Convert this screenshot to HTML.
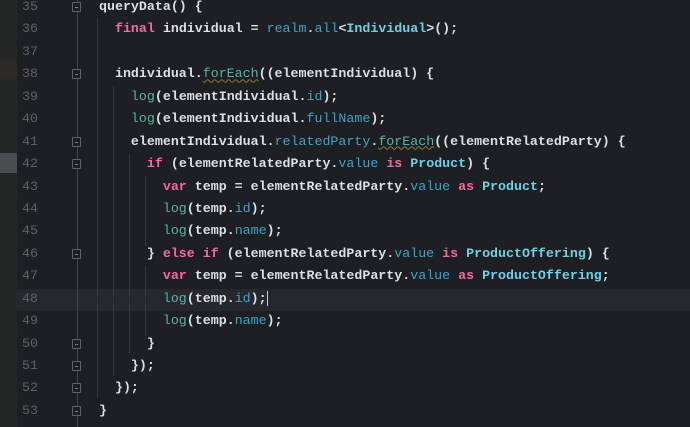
<html><head><style>
body{margin:0;width:690px;height:427px;overflow:hidden;background:#1e1f22;position:relative;font-family:"Liberation Mono",monospace;font-size:13.3px}
.strip{position:absolute;left:0;top:0;width:17px;height:427px;background:#242726}
.cur{position:absolute;left:17px;top:289px;width:673px;height:22px;background:#26282e}
.ln{position:absolute;left:17px;width:21px;text-align:right;color:#5f6168}
.code{position:absolute;left:99px;white-space:pre;color:#dcdfe4;font-weight:bold}
.k{color:#f36b9d}.m{color:#56b6a4;font-weight:normal}.f{color:#3fa3c9;font-weight:normal}.c{color:#6fd0e6}
.g{position:absolute;width:1px;background:#34363b}
.fold{position:absolute;left:72px;width:9px;height:10px;border:1px solid #5f6168;box-sizing:border-box;background:#1e1f22;border-radius:1px}
.fold:after{content:"";position:absolute;left:2px;top:4px;width:3px;height:1px;background:#7a7c82}
.u{text-decoration:underline wavy #8a7d3a;text-decoration-thickness:1px}
</style></head><body>
<div class="strip"></div>
<div style="position:absolute;left:0;top:60px;width:17px;height:17px;background:#2e2b26"></div>
<div style="position:absolute;left:0;top:153px;width:17px;height:20px;background:#4a4c50"></div>
<div class="cur"></div>
<div class="g" style="left:77px;top:0;height:427px;background:#44464b"></div>
<div class="g" style="left:97px;top:18px;height:380px"></div>
<div class="g" style="left:113px;top:86px;height:290px"></div>
<div class="g" style="left:129px;top:154px;height:200px"></div>
<div class="g" style="left:145px;top:176px;height:70px"></div>
<div class="g" style="left:145px;top:266px;height:70px"></div>
<div id="L"></div>
<script>
const lines=[
'queryData() {',
'  <span class=k>final</span> individual = <span class=f>realm</span>.<span class=f>all</span>&lt;<span class=c>Individual</span>&gt;();',
'',
'  individual.<span class="m u">forEach</span>((elementIndividual) {',
'    <span class=m>log</span>(elementIndividual.<span class=f>id</span>);',
'    <span class=m>log</span>(elementIndividual.<span class=f>fullName</span>);',
'    elementIndividual.<span class=f>relatedParty</span>.<span class="m u">forEach</span>((elementRelatedParty) {',
'      <span class=k>if</span> (elementRelatedParty.<span class=f>value</span> <span class=k>is</span> <span class=c>Product</span>) {',
'        <span class=k>var</span> temp = elementRelatedParty.<span class=f>value</span> <span class=k>as</span> <span class=c>Product</span>;',
'        <span class=m>log</span>(temp.<span class=f>id</span>);',
'        <span class=m>log</span>(temp.<span class=f>name</span>);',
'      } <span class=k>else if</span> (elementRelatedParty.<span class=f>value</span> <span class=k>is</span> <span class=c>ProductOffering</span>) {',
'        <span class=k>var</span> temp = elementRelatedParty.<span class=f>value</span> <span class=k>as</span> <span class=c>ProductOffering</span>;',
'        <span class=m>log</span>(temp.<span class=f>id</span>);<span style="border-left:1px solid #ccc"></span>',
'        <span class=m>log</span>(temp.<span class=f>name</span>);',
'      }',
'    });',
'  });',
'}'];
const folds=[35,38,41,42,46,50,51,52,53];
let h='';
lines.forEach((t,i)=>{const top=-4+i*22.44;const n=35+i;
h+=`<div class=ln style="top:${top}px;line-height:22px">${n}</div><div class=code style="top:${top}px;line-height:22px">${t}</div>`;
if(folds.includes(n))h+=`<div class=fold style="top:${top+6}px"></div>`;});
document.getElementById('L').innerHTML=h;
</script>
</body></html>
